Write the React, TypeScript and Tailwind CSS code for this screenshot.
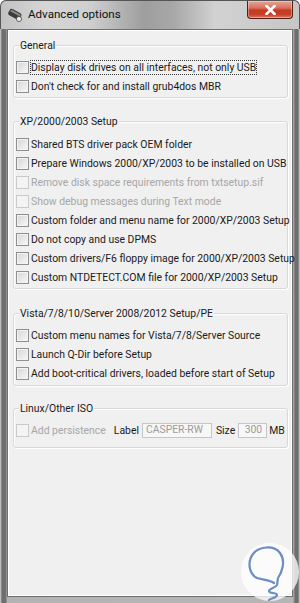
import React from "react";

function Checkbox({ disabled }: { disabled?: boolean }) {
  return (
    <div
      className={
        disabled
          ? "w-[13px] h-[13px] shrink-0 border border-[#cacaca] bg-[#f4f4f4]"
          : "w-[13px] h-[13px] shrink-0 border border-[#8e8f8f] bg-gradient-to-br from-[#d6d6d6] to-[#f8f8f8] shadow-[inset_0_0_0_1px_#f3f3f3]"
      }
    />
  );
}

function Row({ label, disabled, focused }: { label: string; disabled?: boolean; focused?: boolean }) {
  return (
    <div className="h-[19px] flex items-center pl-[2px]">
      <Checkbox disabled={disabled} />
      {focused ? (
        <span className="ml-[1px] border border-dotted border-[#3a3a3a] leading-[13px] whitespace-nowrap text-[#1a1a1a]">
          {label}
        </span>
      ) : (
        <span className={"ml-[2px] whitespace-nowrap " + (disabled ? "text-[#a6a6a6]" : "text-[#1a1a1a]")}>
          {label}
        </span>
      )}
    </div>
  );
}

function Group({ title, children, className }: { title: string; children: React.ReactNode; className?: string }) {
  return (
    <div className={"border border-[#d5d9dc] rounded-[3px] shadow-[inset_1px_1px_0_#ffffff,1px_1px_0_#ffffff] " + (className ?? "")}>
      <div className="-mt-[8px] ml-[5px] h-[15px] leading-[15px] flex">
        <span className="bg-[#f0f0f0] px-[1px] text-[#1a1a1a]">{title}</span>
      </div>
      {children}
    </div>
  );
}

function TitleIcon() {
  return (
    <svg width="16" height="14" viewBox="0 0 16 14">
      <g transform="rotate(28 8 7)">
        <rect x="1" y="3" width="13" height="7" rx="2" fill="#3b3b3b" />
        <rect x="2" y="4" width="11" height="2" rx="1" fill="#8a8a8a" />
      </g>
      <circle cx="12" cy="11" r="2.6" fill="#e9e9e9" stroke="#4a4a4a" strokeWidth="0.8" />
    </svg>
  );
}

function CloseButton() {
  return (
    <div className="w-[46px] h-[18px] rounded-b-[4px] border border-t-0 border-[#4d2118] bg-[linear-gradient(to_bottom,#e6a596_0%,#d9735f_40%,#c43a22_55%,#c8402a_80%,#e07a5f_100%)] shadow-[inset_0_0_0_1px_rgba(255,255,255,0.35)] flex items-center justify-center">
      <svg width="11" height="10" viewBox="0 0 11 10">
        <path d="M1.5 1 L9.5 9 M9.5 1 L1.5 9" stroke="#ffffff" strokeWidth="2.6" strokeLinecap="square" />
      </svg>
    </div>
  );
}

function Logo() {
  return (
    <div className="absolute left-[241px] top-[543px] w-[58px] h-[58px] rounded-full bg-white/75">
      <svg width="58" height="58" viewBox="0 0 58 58" className="absolute left-0 top-0">
        <path
          d="M33 40 C29 37 22 37 16 35 C8 31 6 19 12 11 C18 3 33 2 39 10 C45 18 41 29 37 35 L36 42 C35 45 28 45 28 48 C28 51 36 49 36 52 C36 55 30 55 28 57"
          fill="none"
          stroke="#6b8dc2"
          strokeWidth="2.2"
          strokeLinecap="round"
          strokeLinejoin="round"
        />
      </svg>
    </div>
  );
}

export default function App() {
  return (
    <div className="w-[300px] h-[603px] relative overflow-hidden font-[Roboto,sans-serif] text-[10.4px] bg-[linear-gradient(to_right,#d8d8d8_0px,#6e6e6e_2px,#707070_6px,#b3b3b3_7px,#b6b6b6_293px,#707070_295px,#6e6e6e_298px,#d8d8d8_300px)] rounded-t-[6px] flex flex-col">
      <div className="h-[29px] shrink-0 flex items-start rounded-t-[6px] bg-[linear-gradient(to_right,#c2c2c2_0%,#d6d6d6_15%,#cfcfcf_30%,#9e9e9e_48%,#a8a8a8_58%,#d2d2d2_72%,#c6c6c6_100%)] border border-b-0 border-[#555555]">
        <div className="flex items-center h-[28px] pl-[6px]">
          <TitleIcon />
          <span className="ml-[5px] text-[11.6px] text-[#111111] font-[Roboto,sans-serif] whitespace-nowrap">Advanced options</span>
        </div>
        <div className="ml-auto mr-[6px]">
          <CloseButton />
        </div>
      </div>
      <div className="flex-1 mx-[7px] mb-[6px] border border-[#6f6f6f] bg-[#f0f0f0] shadow-[inset_0_0_0_1px_#ffffff] pl-[5px] pr-[4px] pt-[15px] flex flex-col">
        <Group title="General">
          <div className="mt-[5px] pb-[1px]">
            <Row label="Display disk drives on all interfaces, not only USB" focused />
            <Row label="Don't check for and install grub4dos MBR" />
          </div>
        </Group>
        <Group title="XP/2000/2003 Setup" className="mt-[23px]">
          <div className="mt-[6px] pb-[1px]">
            <Row label="Shared BTS driver pack OEM folder" />
            <Row label="Prepare Windows 2000/XP/2003 to be installed on USB" />
            <Row label="Remove disk space requirements from txtsetup.sif" disabled />
            <Row label="Show debug messages during Text mode" disabled />
            <Row label="Custom folder and menu name for 2000/XP/2003 Setup" />
            <Row label="Do not copy and use DPMS" />
            <Row label="Custom drivers/F6 floppy image for 2000/XP/2003 Setup" />
            <Row label="Custom NTDETECT.COM file for 2000/XP/2003 Setup" />
          </div>
        </Group>
        <Group title="Vista/7/8/10/Server 2008/2012 Setup/PE" className="mt-[24px]">
          <div className="mt-[5px] pb-[2px]">
            <Row label="Custom menu names for Vista/7/8/Server Source" />
            <Row label="Launch Q-Dir before Setup" />
            <Row label="Add boot-critical drivers, loaded before start of Setup" />
          </div>
        </Group>
        <Group title="Linux/Other ISO" className="mt-[22px]">
          <div className="mt-[5px] pb-[7px] h-[19px] flex items-center pl-[2px] box-content">
            <Checkbox disabled />
            <span className="ml-[2px] text-[#a6a6a6] whitespace-nowrap">Add persistence</span>
            <span className="ml-[8px] text-[#1a1a1a]">Label</span>
            <div className="ml-[3px] w-[70px] h-[15px] shrink-0 border border-[#c6c6c6] bg-[#f7f7f7] flex items-center px-[3px] text-[#9c9c9c] leading-none whitespace-nowrap">
              CASPER-RW
            </div>
            <span className="ml-[4px] text-[#1a1a1a]">Size</span>
            <div className="ml-[3px] w-[29px] h-[15px] shrink-0 border border-[#c6c6c6] bg-[#f7f7f7] flex items-center justify-end pr-[4px] text-[#9c9c9c] leading-none">
              300
            </div>
            <span className="ml-[2px] text-[#1a1a1a]">MB</span>
          </div>
        </Group>
      </div>
      <Logo />
    </div>
  );
}
